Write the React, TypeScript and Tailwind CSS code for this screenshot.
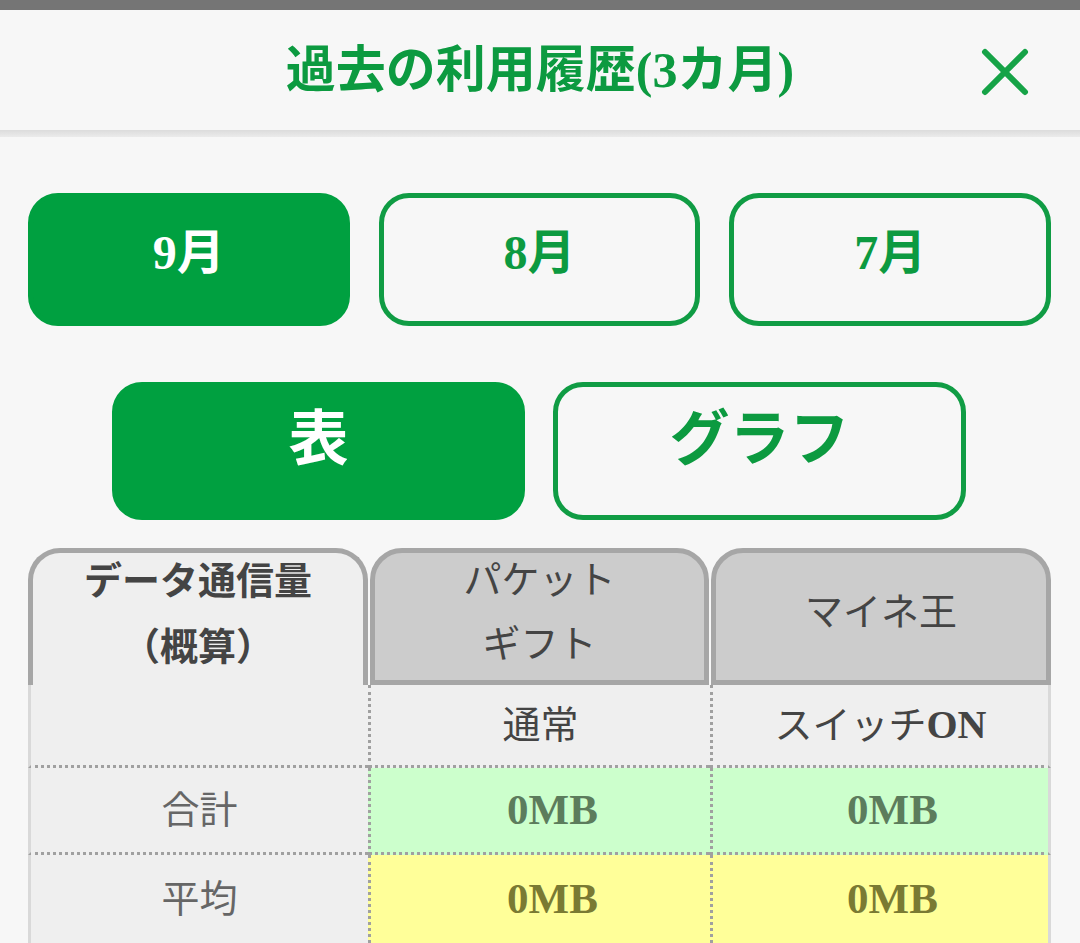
import React, { useState } from 'react';

const months = ['9月', '8月', '7月'];

const CloseIcon = () => (
  <svg width="48" height="48" viewBox="0 0 48 48" fill="none">
    <path d="M4 4L44 44M44 4L4 44" stroke="#16a347" strokeWidth="6" strokeLinecap="round" />
  </svg>
);

// row label cell: solid left edge, dotted bottom
const labelCell =
  'flex items-center justify-center border-l-[3px] border-dotted border-[#a0a0a0] border-l-[#d9d9d9] [border-left-style:solid] bg-[#efefef]';
const midCell = 'flex items-center justify-center border-l-[3px] border-dotted border-[#a0a0a0]';
const lastCell =
  'flex items-center justify-center border-l-[3px] border-r-[3px] border-dotted border-[#a0a0a0] border-r-[#d9d9d9] [border-right-style:solid]';

const App: React.FC = () => {
  const [month, setMonth] = useState('9月');
  const [view, setView] = useState<'table' | 'graph'>('table');

  return (
    <div className="min-h-screen bg-[#f7f7f7] font-['Liberation_Serif','Noto_Sans_CJK_JP',serif]">
      <div className="h-[10px] bg-[#757575]" />

      {/* header */}
      <header className="grid h-[120px] grid-cols-[1fr_auto_1fr] items-center bg-[#f7f7f7]">
        <div />
        <h1 className="text-[50px] font-bold leading-none text-[#0c9a40]">過去の利用履歴(3カ月)</h1>
        <div className="flex justify-end pr-[51px] pt-[4px]">
          <button aria-label="閉じる">
            <CloseIcon />
          </button>
        </div>
      </header>
      <div className="h-[7px] bg-linear-to-b from-[#dcdcdc] to-[#ebebeb]" />

      <main className="pl-[28px] pr-[29px] pt-[56px]">
        {/* month tabs */}
        <div className="grid grid-cols-3 gap-[29px]">
          {months.map((m) => (
            <button
              key={m}
              onClick={() => setMonth(m)}
              className={`flex h-[133px] items-center justify-center rounded-[30px] border-[5px] pb-[14px] text-[48px] font-bold ${
                month === m
                  ? 'border-[#00a040] bg-[#00a040] text-white'
                  : 'border-[#109c44] bg-[#f7f7f7] text-[#0c9a40]'
              }`}
            >
              {m}
            </button>
          ))}
        </div>

        {/* table / graph toggle */}
        <div className="mt-[56px] flex justify-center gap-[28px] pr-[1px]">
          <button
            onClick={() => setView('table')}
            className={`flex h-[138px] w-[413px] items-center justify-center rounded-[30px] border-[5px] pb-[22px] text-[60px] font-bold ${
              view === 'table' ? 'border-[#00a040] bg-[#00a040] text-white' : 'border-[#109c44] text-[#0c9a40]'
            }`}
          >
            表
          </button>
          <button
            onClick={() => setView('graph')}
            className={`flex h-[138px] w-[413px] items-center justify-center rounded-[30px] border-[5px] pb-[22px] text-[60px] font-bold ${
              view === 'graph' ? 'border-[#00a040] bg-[#00a040] text-white' : 'border-[#109c44] text-[#0c9a40]'
            }`}
          >
            グラフ
          </button>
        </div>

        {/* usage table */}
        <div className="mt-[28px]">
          <div className="grid grid-cols-[340px_339px_340px] gap-[2px] text-[38px] text-[#444]">
            <div className="flex h-[137px] flex-col items-center justify-center rounded-t-[32px] border-[5px] border-b-0 border-[#a6a6a6] bg-[#efefef] pb-[10px] font-bold leading-[66px]">
              <span>データ通信量</span>
              <span>（概算）</span>
            </div>
            <div className="flex h-[137px] flex-col items-center justify-center rounded-t-[32px] border-[5px] border-[#a6a6a6] bg-[#cccccc] pb-[10px] leading-[64px]">
              <span>パケット</span>
              <span>ギフト</span>
            </div>
            <div className="flex h-[137px] items-center justify-center rounded-t-[32px] border-[5px] border-[#a6a6a6] bg-[#cccccc] pb-[10px] leading-[64px]">
              マイネ王
            </div>
          </div>

          <div className="grid grid-cols-[340px_342px_341px] text-[38px]">
            <div className={`${labelCell} h-[83px] border-b-[3px]`} />
            <div className={`${midCell} h-[83px] border-b-[3px] bg-[#efefef] text-[#444]`}>通常</div>
            <div className={`${lastCell} h-[83px] border-b-[3px] bg-[#efefef] text-[#444]`}>
              <span>
                スイッチ<b className="text-[40px]">ON</b>
              </span>
            </div>

            <div className={`${labelCell} h-[87px] border-b-[3px] text-[#666]`}>合計</div>
            <div className={`${midCell} h-[87px] border-b-[3px] bg-[#ccffcc] pl-[24px] text-[43px] font-bold text-[#5c7c5c]`}>
              0MB
            </div>
            <div className={`${lastCell} h-[87px] border-b-[3px] bg-[#ccffcc] pl-[24px] text-[43px] font-bold text-[#5c7c5c]`}>
              0MB
            </div>

            <div className={`${labelCell} h-[88px] text-[#666]`}>平均</div>
            <div className={`${midCell} h-[88px] bg-[#ffff99] pl-[24px] text-[43px] font-bold text-[#7a7a33]`}>
              0MB
            </div>
            <div className={`${lastCell} h-[88px] bg-[#ffff99] pl-[24px] text-[43px] font-bold text-[#7a7a33]`}>
              0MB
            </div>
          </div>
        </div>
      </main>
    </div>
  );
};

export default App;
